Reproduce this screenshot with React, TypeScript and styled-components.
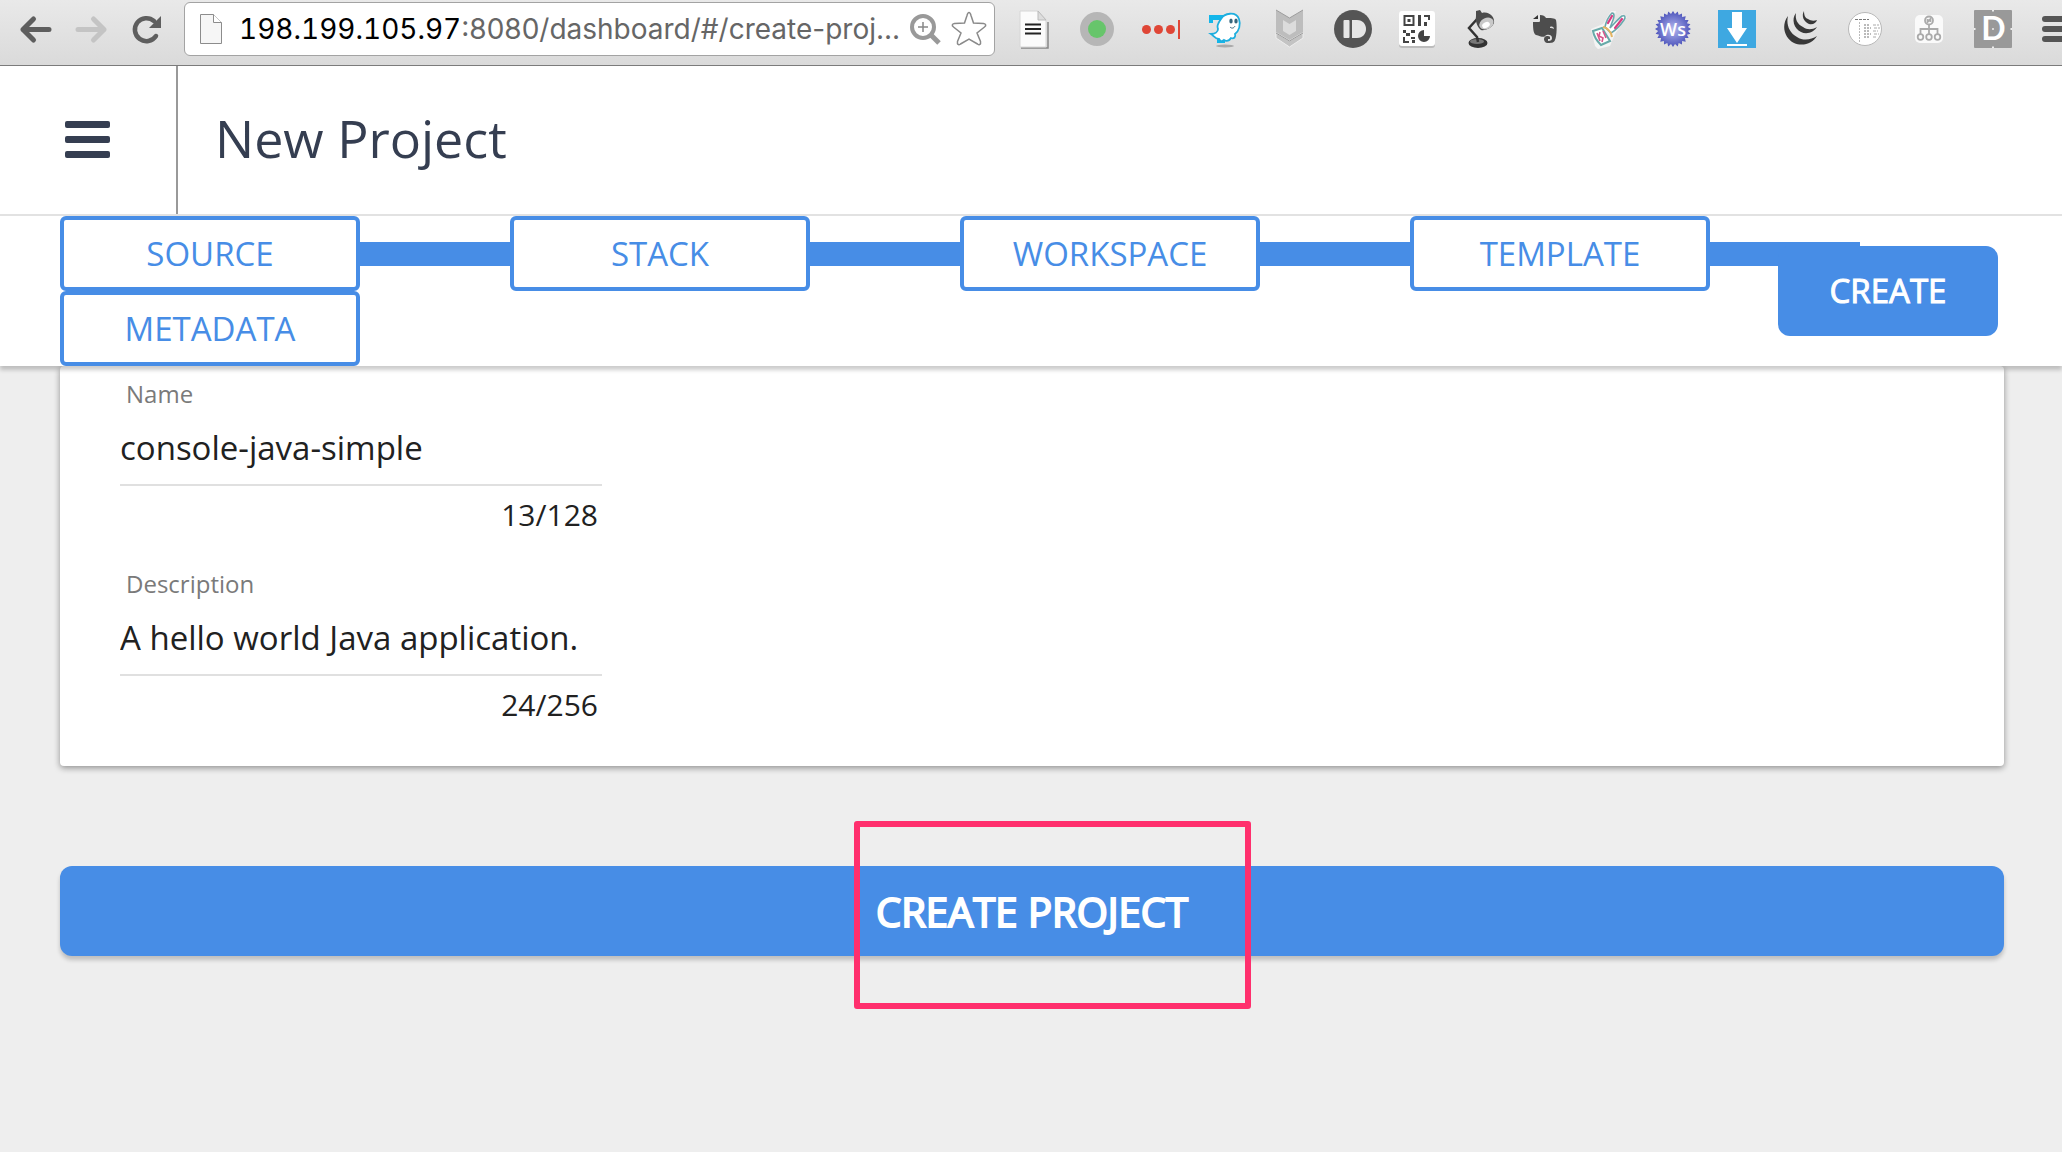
import React, { ReactNode, useState } from "react";
import styled, { createGlobalStyle } from "styled-components";

const BLUE = "#478de6";
const NAVY = "#353e51";

const GlobalStyle = createGlobalStyle`
  * { box-sizing: border-box; }
  body {
    margin: 0;
    background: #eee;
    font-family: "Open Sans", "Noto Sans", sans-serif;
    color: #212121;
  }
  button, input { font: inherit; color: inherit; }
`;

const Page = styled.div`
  min-height: 100vh;
  overflow: hidden;
`;

/* Browser toolbar */

const Toolbar = styled.div`
  display: flex;
  align-items: flex-start;
  height: 66px;
  padding: 2px 0 0 16px;
  border-bottom: 1px solid #7b7b7b;
  background: linear-gradient(#e9e9e9, #dadada);
  overflow: hidden;
`;

const IconButton = styled.button<{ $width?: number }>`
  display: block;
  flex: none;
  width: ${(p) => p.$width ?? 38}px;
  height: 54px;
  padding: 0;
  border: 0;
  background: none;
  overflow: hidden;
  svg { display: block; }
`;

const NavButtons = styled.nav`
  display: flex;
  flex: none;
  gap: 17px;
  margin-right: 20px;
`;

const AddressBar = styled.form`
  display: flex;
  flex: 1;
  align-items: center;
  gap: 6px;
  min-width: 0;
  height: 54px;
  padding: 0 6px 0 14px;
  border: 1px solid #a3a3a3;
  border-radius: 6px;
  background: #fff;
`;

const Url = styled.div`
  display: flex;
  flex: 1;
  align-items: center;
  min-width: 0;
  padding-left: 10px;
  font-family: Inter, Roboto, sans-serif;
  font-size: 28px;
`;

const Host = styled.label`
  flex: none;
  color: #000;
  font-variant-numeric: tabular-nums;
`;

const UrlInput = styled.input`
  flex: 1;
  min-width: 0;
  height: 44px;
  padding: 0;
  border: 0;
  outline: 0;
  background: none;
  color: #666;
`;

const Extensions = styled.div`
  display: flex;
  flex: none;
  gap: 26px;
  margin-left: 19px;
`;

/* Application header */

const Header = styled.header`
  display: flex;
  align-items: stretch;
  height: 150px;
  border-bottom: 2px solid #e2e2e2;
  background: #fff;
`;

const MenuButton = styled.button`
  display: flex;
  flex-direction: column;
  align-items: center;
  justify-content: center;
  gap: 8px;
  width: 178px;
  padding: 0 2px 2px 0;
  border: 0;
  border-right: 2px solid #999;
  background: none;
`;

const MenuBar = styled.span`
  width: 45px;
  height: 7px;
  border-radius: 2px;
  background: ${NAVY};
`;

const Title = styled.h1`
  margin: 0;
  padding-left: 37px;
  color: ${NAVY};
  font-size: 52px;
  font-weight: 400;
  line-height: 144px;
`;

/* Step bar */

const StepBar = styled.div`
  position: relative;
  z-index: 1;
  padding: 0 60px;
  background: #fff;
  box-shadow: 0 4px 4px rgba(0, 0, 0, 0.2);
`;

const Steps = styled.ol`
  display: grid;
  grid-template-columns: repeat(auto-fill, 450px);
  margin: 0;
  padding: 0;
  list-style: none;
`;

const Step = styled.li<{ $linked: boolean }>`
  display: flex;
  &::after {
    content: "";
    flex: 1;
    height: 24px;
    margin-top: 26px;
    background: ${(p) => (p.$linked ? BLUE : "none")};
  }
`;

const StepButton = styled.button`
  width: 300px;
  height: 75px;
  padding: 0;
  border: 4px solid ${BLUE};
  border-radius: 6px;
  background: #fff;
  color: ${BLUE};
  font-size: 33px;
  line-height: 44px;
`;

const PrimaryButton = styled.button`
  height: 90px;
  padding: 0 0 2px;
  border: 0;
  border-radius: 12px;
  background: ${BLUE};
  color: #fff;
  -webkit-text-stroke: 1px #fff;
`;

const CreateButton = styled(PrimaryButton)`
  position: absolute;
  top: 30px;
  right: 64px;
  width: 220px;
  font-size: 33px;
`;

/* Metadata form */

const Content = styled.main`
  padding: 0 58px 60px 60px;
`;

const Card = styled.section`
  display: flex;
  flex-direction: column;
  gap: 33px;
  padding: 12px 60px 41px;
  border-radius: 4px;
  background: #fff;
  box-shadow: 0 2px 6px rgba(0, 0, 0, 0.4);
`;

const FieldBox = styled.div`
  display: flex;
  flex-direction: column;
  max-width: 482px;
`;

const FieldLabel = styled.label`
  padding-left: 6px;
  color: #7a7a7a;
  font-size: 24px;
  line-height: 32px;
`;

const FieldInput = styled.input`
  height: 60px;
  margin-top: 16px;
  padding: 0 0 16px;
  border: 0;
  border-bottom: 2px solid #e0e0e0;
  outline: 0;
  background: none;
  font-size: 33px;
  line-height: 44px;
`;

const Counter = styled.span`
  margin-top: 9px;
  padding-right: 4px;
  font-size: 30px;
  line-height: 40px;
  text-align: right;
`;

const Submit = styled.div`
  position: relative;
  margin-top: 100px;
`;

const SubmitButton = styled(PrimaryButton)`
  display: block;
  width: 100%;
  padding: 0;
  font-size: 40px;
  -webkit-text-stroke-width: 2px;
  box-shadow: 0 4px 4px rgba(0, 0, 0, 0.2);
`;

const Highlight = styled.span`
  position: absolute;
  top: -45px;
  left: calc(50% - 178px);
  width: 397px;
  height: 188px;
  border: 6px solid #ff2f6d;
  border-radius: 3px;
  pointer-events: none;
`;

/* Every toolbar drawing shares a 54px tall canvas. */
const Glyph = ({ width = 38, children }: { width?: number; children: ReactNode }) => (
  <svg width={width} height="54" viewBox={`0 0 ${width} 54`} fill="none" aria-hidden="true">
    {children}
  </svg>
);

const gear = Array.from({ length: 48 }, (_, i) => {
  const r = i % 2 ? 15 : 18;
  const a = (i * Math.PI) / 24;
  return `${(19 + r * Math.cos(a)).toFixed(1)},${(27 + r * Math.sin(a)).toFixed(1)}`;
}).join(" ");

const extensions: { name: string; art: ReactNode }[] = [
  {
    name: "Reader",
    art: (
      <>
        <path d="M7 46h27V20" stroke="#888" strokeWidth="1.5" />
        <path d="M6 9h18l8 9v27H6z" fill="#fbfbfb" stroke="#d6d6d6" />
        <path d="M24 9v9h8z" fill="#ddd" stroke="#bbb" />
        <path d="M11 22.500h16M11 27h16M11 31.500h16" stroke="#222" strokeWidth="2.200" />
      </>
    ),
  },
  {
    name: "Status",
    art: (
      <>
        <circle cx="19" cy="27" r="17" fill="#b6b6b6" />
        <circle cx="19" cy="27" r="9" fill="#67c56b" />
      </>
    ),
  },
  {
    name: "Password manager",
    art: (
      <>
        <g fill="#df4636">
          <circle cx="4.500" cy="27.500" r="4.500" />
          <circle cx="16.500" cy="27.500" r="4.500" />
          <circle cx="28.500" cy="27.500" r="4.500" />
        </g>
        <path d="M37 18v19" stroke="#df4636" strokeWidth="2" />
      </>
    ),
  },
  {
    name: "Ghost text",
    art: (
      <>
        <ellipse cx="19" cy="44" rx="9" ry="1.500" fill="#aaa" />
        <path d="M3 13h18v5h-5v19h3v4h-8v-4h2V18H7v3H3z" fill="#13b6ea" />
        <path
          d="M15 17c3-6 15-8 18 0 2 6 0 12-4 15 1 3-1 5-4 4-3 5-7 2-7 2-2 2-4 1-5-1-4 0-5-3-8-5 4 0 7-2 7-5-1-2 0-6 3-10z"
          fill="#fff"
          stroke="#1eaede"
          strokeWidth="1.800"
        />
        <ellipse cx="25" cy="19" rx="1.700" ry="2.500" fill="#36667e" />
        <ellipse cx="30" cy="19" rx="1.700" ry="2.500" fill="#36667e" />
        <path d="M24 25c2 2 4 1 5-1" stroke="#36667e" />
      </>
    ),
  },
  {
    name: "Shield",
    art: (
      <>
        <path d="M6 8l13.500 8L33 8v22l-13.500 8L6 30z" fill="#bdbdbd" />
        <path d="M13 18l6.500 4 6.500-4v11l-6.500 4-6.500-4z" fill="#dcdcdc" />
        <path d="M6 8l13.500 8L33 8" stroke="#9d9d9d" />
        <path d="M6 31l13.500 8L33 31v5l-13.500 9L6 36z" fill="#c3c3c3" stroke="#eee" />
        <path d="M6 31l13.500 8L33 31" stroke="#999" />
      </>
    ),
  },
  {
    name: "Push",
    art: (
      <>
        <circle cx="19" cy="27" r="19" fill="#555" />
        <rect x="9.500" y="18" width="6" height="18" rx="1" fill="#e6e6e6" />
        <path d="M18 18h5c12 0 12 18 0 18h-5z" fill="#e6e6e6" />
      </>
    ),
  },
  {
    name: "QR code",
    art: (
      <>
        <rect x="1" y="10" width="36" height="36" rx="3" fill="#bcbcbc" />
        <rect x="1" y="9" width="36" height="35" rx="3" fill="#fff" />
        <rect x="6.500" y="14" width="9" height="9" stroke="#444" strokeWidth="2" />
        <path
          d="M9.500 17h3v3h-3zM20 13h3v11h-3zM26 13h6v5h-2v-3h-4zM26 20h3v4h-3zM5 28h3v3H5zM8 31h4v3H8zM13 28h4v3h-4zM5 35h2v4h4v2H5zM13 35h4v2h-4zM14 38h3v3h-3z"
          fill="#444"
        />
        <path d="M26 34v-6a6 6 0 1 0 6 6z" fill="#444" />
      </>
    ),
  },
  {
    name: "Lamp",
    art: (
      <>
        <ellipse cx="16" cy="41" rx="9.500" ry="5" fill="#333" />
        <ellipse cx="15" cy="39.500" rx="7" ry="2.500" fill="#777" />
        <path d="M16 40l-1-5-8-9 9-10" stroke="#333" strokeWidth="2.500" />
        <path d="M14 9l4-1 2 3c7-2 13 4 12 10-2 5-9 8-13 7-3-2-6-8-5-14z" fill="#4b4b4b" />
        <ellipse cx="24.500" cy="21.500" rx="7.500" ry="5.500" transform="rotate(-25 24.500 21.500)" fill="#c9c9c9" />
        <ellipse cx="24" cy="23" rx="4" ry="2.800" transform="rotate(-25 24 23)" fill="#fff" />
      </>
    ),
  },
  {
    name: "Notes",
    art: (
      <>
        <path
          d="M14 13c3 0 5 1 6 3 4 0 9 0 10 2 1 4 1 16-1 20-1 3-4 3-8 3-4-1-4-7 0-7 1 0 3 0 3 1v2h-2v2c3 0 4-1 4-3 0-4-5-4-7-2-1 2-5 0-9-1-3-1-3-9-3-13h6c1 0 1-1 1-2z"
          fill="#4d4d4d"
        />
        <path d="M7 17l5-4v4z" fill="#333" />
        <path d="M24 25c2-1 4 0 4 2-1-1-3-1-4-1z" fill="#ddd" />
      </>
    ),
  },
  {
    name: "Rabbit",
    art: (
      <>
        <path d="M1 27l12-5 8-13h5l-3 12 9-9 5 3-12 17-5 12-12 3-3-3z" fill="#f4f4f4" />
        <path
          d="M15 25c1-5 4-11 7-14 3 0 2 4 1 7l-3 8c4-4 8-9 12-12 3-1 4 1 2 4-4 6-8 10-13 13z"
          fill="#fff"
          stroke="#69a8ad"
          strokeWidth="1.600"
        />
        <path d="M18 21l4-7M25 26l7-9" stroke="#d83d81" strokeWidth="2.200" strokeLinecap="round" />
        <path d="M3 29l9-3 8 13-9 4c-4-4-7-8-8-14z" fill="#fff" stroke="#67aaa9" strokeWidth="2" />
        <path d="M7 31l3 8M10 30l-1 4 4 2-1 4M13 29l3 7" stroke="#d8588c" strokeWidth="1.600" />
        <path d="M13 25c5 1 8 5 9 10" stroke="#e4b462" strokeWidth="2" />
      </>
    ),
  },
  {
    name: "Web services",
    art: (
      <>
        <defs>
          <radialGradient id="badge">
            <stop offset="0" stopColor="#b4b8ef" />
            <stop offset="1" stopColor="#4d54bb" />
          </radialGradient>
        </defs>
        <polygon points={gear} fill="url(#badge)" />
        <text x="19" y="34" textAnchor="middle" fill="#fff" fontFamily="Open Sans, sans-serif" fontWeight="600" fontSize="18">
          Ws
        </text>
      </>
    ),
  },
  {
    name: "Download",
    art: (
      <>
        <path d="M0 8h38v38H0z" fill="#3ea8e1" />
        <path d="M14 10h10v16h5l-10 15-10-15h5zM9 42h20v2H9z" fill="#fff" />
      </>
    ),
  },
  {
    name: "jQuery",
    art: (
      <g fill="#383838">
        <path d="M6 14c-7 9-4 22 6 27 9 4 19 0 23-7-6 4-14 5-20 1C7 31 4 22 6 14z" />
        <path d="M14 11c-5 6-2 16 5 19 6 3 13 0 16-5-5 3-10 3-14 0-6-3-8-8-7-14z" />
        <path d="M22 9c-3 5 0 11 5 13 4 1 7-1 8-4-3 1-6 1-9-1-3-1-4-4-4-8z" />
      </g>
    ),
  },
  {
    name: "JSON viewer",
    art: (
      <>
        <circle cx="19" cy="27" r="16.500" fill="#fff" stroke="#b8b8b8" />
        <path d="M9 17.500h14" stroke="#777" strokeDasharray="3 1" />
        <path d="M13.500 20v20" stroke="#bbb" strokeDasharray="2 1" />
        <path d="M18 23h6M18 26h7M18 29h6M18 32h7M18 35h6" stroke="#777" strokeDasharray="2 1" />
        <path d="M27 23h6M28 26h6M27 29h5M28 32h5M27 35h4" stroke="#aaa" strokeDasharray="3 1" />
      </>
    ),
  },
  {
    name: "Site map",
    art: (
      <>
        <rect x="5" y="13" width="28" height="28" rx="5" fill="#fafafa" />
        <g stroke="#aaa" strokeWidth="1.800">
          <circle cx="19" cy="18.500" r="4" />
          <circle cx="10.500" cy="35" r="2.800" />
          <circle cx="19" cy="35" r="2.800" />
          <circle cx="27.500" cy="35" r="2.800" />
          <path d="M19 23v9M10.500 32v-5h17v5M17.500 17v3l3-3v3" />
        </g>
      </>
    ),
  },
  {
    name: "Dash",
    art: (
      <>
        <rect y="8" width="38" height="38" rx="1" fill="#999" />
        <path d="M19 8v1.500M19 44.500V46M0 27h1.500M36.500 27H38" stroke="#eee" strokeWidth="2" />
        <text x="19.500" y="38" textAnchor="middle" fill="#fff" fontFamily="Lato, sans-serif" fontWeight="700" fontSize="32">
          D
        </text>
        <circle cx="19" cy="27" r="1" fill="#eee" />
      </>
    ),
  },
];

const steps = ["SOURCE", "STACK", "WORKSPACE", "TEMPLATE", "METADATA"];

function Field({ id, label, initial, count }: { id: string; label: string; initial: string; count: string }) {
  const [value, setValue] = useState(initial);
  return (
    <FieldBox>
      <FieldLabel htmlFor={id}>{label}</FieldLabel>
      <FieldInput id={id} value={value} onChange={(e) => setValue(e.target.value)} />
      <Counter>{count}</Counter>
    </FieldBox>
  );
}

function BrowserToolbar() {
  return (
    <Toolbar>
      <NavButtons>
        <IconButton aria-label="Back">
          <Glyph>
            <path
              d="M33 27.500H7M17.500 17 7 27.500 17.500 38"
              stroke="#5e5e5e"
              strokeWidth="5"
              strokeLinecap="round"
              strokeLinejoin="round"
            />
          </Glyph>
        </IconButton>
        <IconButton aria-label="Forward">
          <Glyph>
            <path
              d="M7 27.500h26M22.500 17 33 27.500 22.500 38"
              stroke="#c4c4c4"
              strokeWidth="5"
              strokeLinecap="round"
              strokeLinejoin="round"
            />
          </Glyph>
        </IconButton>
        <IconButton aria-label="Reload">
          <Glyph>
            <path d="M30 34a11.500 11.500 0 1 1-2-15" stroke="#5e5e5e" strokeWidth="4.500" strokeLinecap="round" />
            <path d="M35 14v12H23z" fill="#5e5e5e" />
          </Glyph>
        </IconButton>
      </NavButtons>

      <AddressBar onSubmit={(e) => e.preventDefault()}>
        <Glyph width={24}>
          <path d="M1.500 12.500h13l8 8v21h-21z" fill="#f6f6f6" stroke="#8c8c8c" />
          <path d="M14.500 12.500v8h8" fill="#fff" stroke="#8c8c8c" />
        </Glyph>
        <Url>
          <Host htmlFor="url">198.199.105.97</Host>
          <UrlInput id="url" defaultValue=":8080/dashboard/#/create-proj..." />
        </Url>
        <IconButton type="button" aria-label="Zoom">
          <Glyph>
            <circle cx="17" cy="25" r="11" stroke="#999" strokeWidth="4" />
            <path d="M25 33l8 8" stroke="#999" strokeWidth="5" />
            <path d="M12 25h10M17 20v10" stroke="#888" strokeWidth="1.500" />
          </Glyph>
        </IconButton>
        <IconButton type="button" aria-label="Bookmark">
          <Glyph>
            <path
              d="M19 10.500c1 0 1.500 1 2 3l2.500 7.500 10 .500c2.500.500 3 2 1 3.500l-7.500 6 3.500 8.500c.500 3-1 4-3 2.500L19 37l-8.500 5c-2 1.500-3.500.500-3-2.500L11 31l-7.500-6c-2-1.500-1.500-3 1-3.500l10-.500 2.500-7.500c.500-2 1-3 2-3z"
              stroke="#8a8a8a"
              strokeWidth="1.500"
            />
          </Glyph>
        </IconButton>
      </AddressBar>

      <Extensions>
        {extensions.map((ext) => (
          <IconButton key={ext.name} aria-label={ext.name}>
            <Glyph>{ext.art}</Glyph>
          </IconButton>
        ))}
        <IconButton $width={24} aria-label="Browser menu">
          <Glyph>
            <path d="M7 17h30M7 27h30M7 37h30" stroke="#555" strokeWidth="6" strokeLinecap="round" />
          </Glyph>
        </IconButton>
      </Extensions>
    </Toolbar>
  );
}

export default function App() {
  return (
    <>
      <GlobalStyle />
      <Page>
        <BrowserToolbar />
        <Header>
          <MenuButton aria-label="Menu">
            <MenuBar />
            <MenuBar />
            <MenuBar />
          </MenuButton>
          <Title>New Project</Title>
        </Header>
        <StepBar>
          <Steps>
            {steps.map((step, i) => (
              <Step key={step} $linked={i < steps.length - 1}>
                <StepButton>{step}</StepButton>
              </Step>
            ))}
          </Steps>
          <CreateButton>CREATE</CreateButton>
        </StepBar>
        <Content>
          <Card>
            <Field id="name" label="Name" initial="console-java-simple" count="13/128" />
            <Field id="description" label="Description" initial="A hello world Java application." count="24/256" />
          </Card>
          <Submit>
            <SubmitButton>CREATE PROJECT</SubmitButton>
            <Highlight />
          </Submit>
        </Content>
      </Page>
    </>
  );
}
